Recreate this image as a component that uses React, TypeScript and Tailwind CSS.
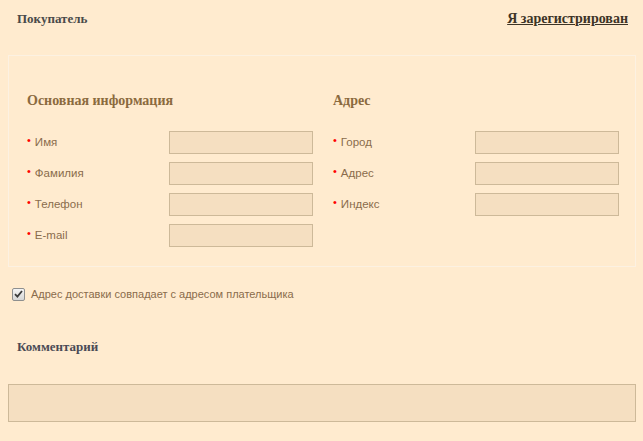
import React from "react";

const sans = { fontFamily: "'Liberation Sans', Arial, sans-serif" };
const serif = { fontFamily: "'Liberation Serif', 'Times New Roman', serif" };

function Field({ label }: { label: string }) {
  return (
    <div className="flex items-center h-[23px]">
      <div className="w-[142px] flex items-center text-[11.5px] text-[#8a6b4c]" style={sans}>
        <span className="text-[#ff0000] text-[11px] leading-none mr-[4px] -mt-[5px]">•</span>
        <span>{label}</span>
      </div>
      <input className="w-[144px] h-[23px] bg-[#f5dfc1] border border-[#cdb999] outline-none" />
    </div>
  );
}

export default function App() {
  return (
    <div className="w-[643px] h-[441px] bg-[#ffebcf] overflow-hidden">
      <div className="flex justify-between items-center pl-[17px] pr-[15px] pt-[10px] h-[27px]">
        <span className="text-[13px] font-bold text-[#4a4a4a]" style={serif}>Покупатель</span>
        <a href="#" className="text-[14px] font-bold text-[#3d3426] underline" style={serif}>Я зарегистрирован</a>
      </div>
      <div className="mx-[8px] mt-[28px] mr-[7px] border border-[#fcf1e2] pl-[18px] pr-[16px] pt-[36px] pb-[19px]">
        <div className="grid grid-cols-[286px_286px] gap-x-[20px]">
          <div>
            <h3 className="text-[14px] font-bold text-[#8b6a3e] h-[18px] leading-[18px]" style={serif}>Основная информация</h3>
            <div className="mt-[21px] flex flex-col gap-[8px]">
              <Field label="Имя" />
              <Field label="Фамилия" />
              <Field label="Телефон" />
              <Field label="E-mail" />
            </div>
          </div>
          <div>
            <h3 className="text-[14px] font-bold text-[#8b6a3e] h-[18px] leading-[18px]" style={serif}>Адрес</h3>
            <div className="mt-[21px] flex flex-col gap-[8px]">
              <Field label="Город" />
              <Field label="Адрес" />
              <Field label="Индекс" />
            </div>
          </div>
        </div>
      </div>
      <label className="flex items-center mt-[20px] pl-[12px] h-[14px]">
        <span className="w-[13px] h-[13px] border border-[#8e8f8f] rounded-[2px] bg-gradient-to-b from-[#f4f4f4] to-[#d6d6d6] flex items-center justify-center">
          <svg width="9" height="8" viewBox="0 0 9 8">
            <path d="M1 4.2 L3.4 6.6 L8 1" fill="none" stroke="#3c3c3c" strokeWidth="1.8" />
          </svg>
        </span>
        <span className="ml-[6px] text-[11px] text-[#8a6b4c]" style={sans}>Адрес доставки совпадает с адресом плательщика</span>
      </label>
      <div className="pl-[17px] mt-[38px] h-[16px] flex items-center">
        <span className="text-[13px] font-bold text-[#4a4a55]" style={serif}>Комментарий</span>
      </div>
      <textarea className="block mx-[8px] mt-[29px] w-[628px] h-[38px] bg-[#f5dfc1] border border-[#cdb999] outline-none resize-none" />
    </div>
  );
}
